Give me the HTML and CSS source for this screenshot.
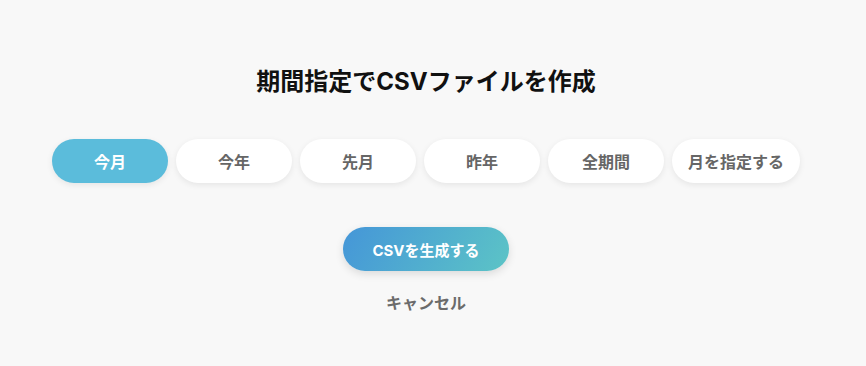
FILE: index.html
```html
<!DOCTYPE html>
<html lang="ja">
<head>
<meta charset="utf-8">
<link rel="stylesheet" href="styles.css">
</head>
<body>
<main class="panel">
  <h1 class="title">期間指定でCSVファイルを作成</h1>
  <div class="periods">
    <button class="chip chip-active">今月</button>
    <button class="chip">今年</button>
    <button class="chip">先月</button>
    <button class="chip">昨年</button>
    <button class="chip">全期間</button>
    <button class="chip">月を指定する</button>
  </div>
  <button class="generate">CSVを生成する</button>
  <button class="cancel">キャンセル</button>
</main>
</body>
</html>
```
FILE: styles.css
```css
html, body {
  margin: 0;
  padding: 0;
  background: #f8f8f8;
}
body {
  font-family: "Inter", "Noto Sans CJK JP", "Noto Sans", sans-serif;
  width: 852px;
  height: 366px;
}
.panel {
  display: flex;
  flex-direction: column;
  align-items: center;
  padding-top: 65px;
}
.title {
  margin: 0;
  font-size: 24px;
  line-height: 34px;
  font-weight: 700;
  color: #111;
}
.periods {
  display: flex;
  gap: 8px;
  margin-top: 40px;
}
button {
  font-family: inherit;
  border: none;
  cursor: pointer;
}
.chip {
  min-width: 116px;
  height: 44px;
  padding: 0 16px;
  border-radius: 22px;
  background: #fff;
  color: #666;
  font-size: 16px;
  font-weight: 700;
  box-shadow: 0 2px 6px rgba(0,0,0,0.08);
}
.chip-active {
  background: #5bbcdb;
  color: #fff;
}
.generate {
  margin-top: 44px;
  width: 166px;
  height: 44px;
  border-radius: 22px;
  background: linear-gradient(120deg, #4596d8 0%, #5cc4c6 100%);
  color: #fff;
  font-size: 15px;
  font-weight: 700;
  box-shadow: 0 3px 8px rgba(0,0,0,0.12);
}
.cancel {
  margin-top: 20px;
  background: none;
  color: #6b6b6b;
  font-size: 16px;
  font-weight: 700;
  padding: 0;
  line-height: 24px;
}
```
